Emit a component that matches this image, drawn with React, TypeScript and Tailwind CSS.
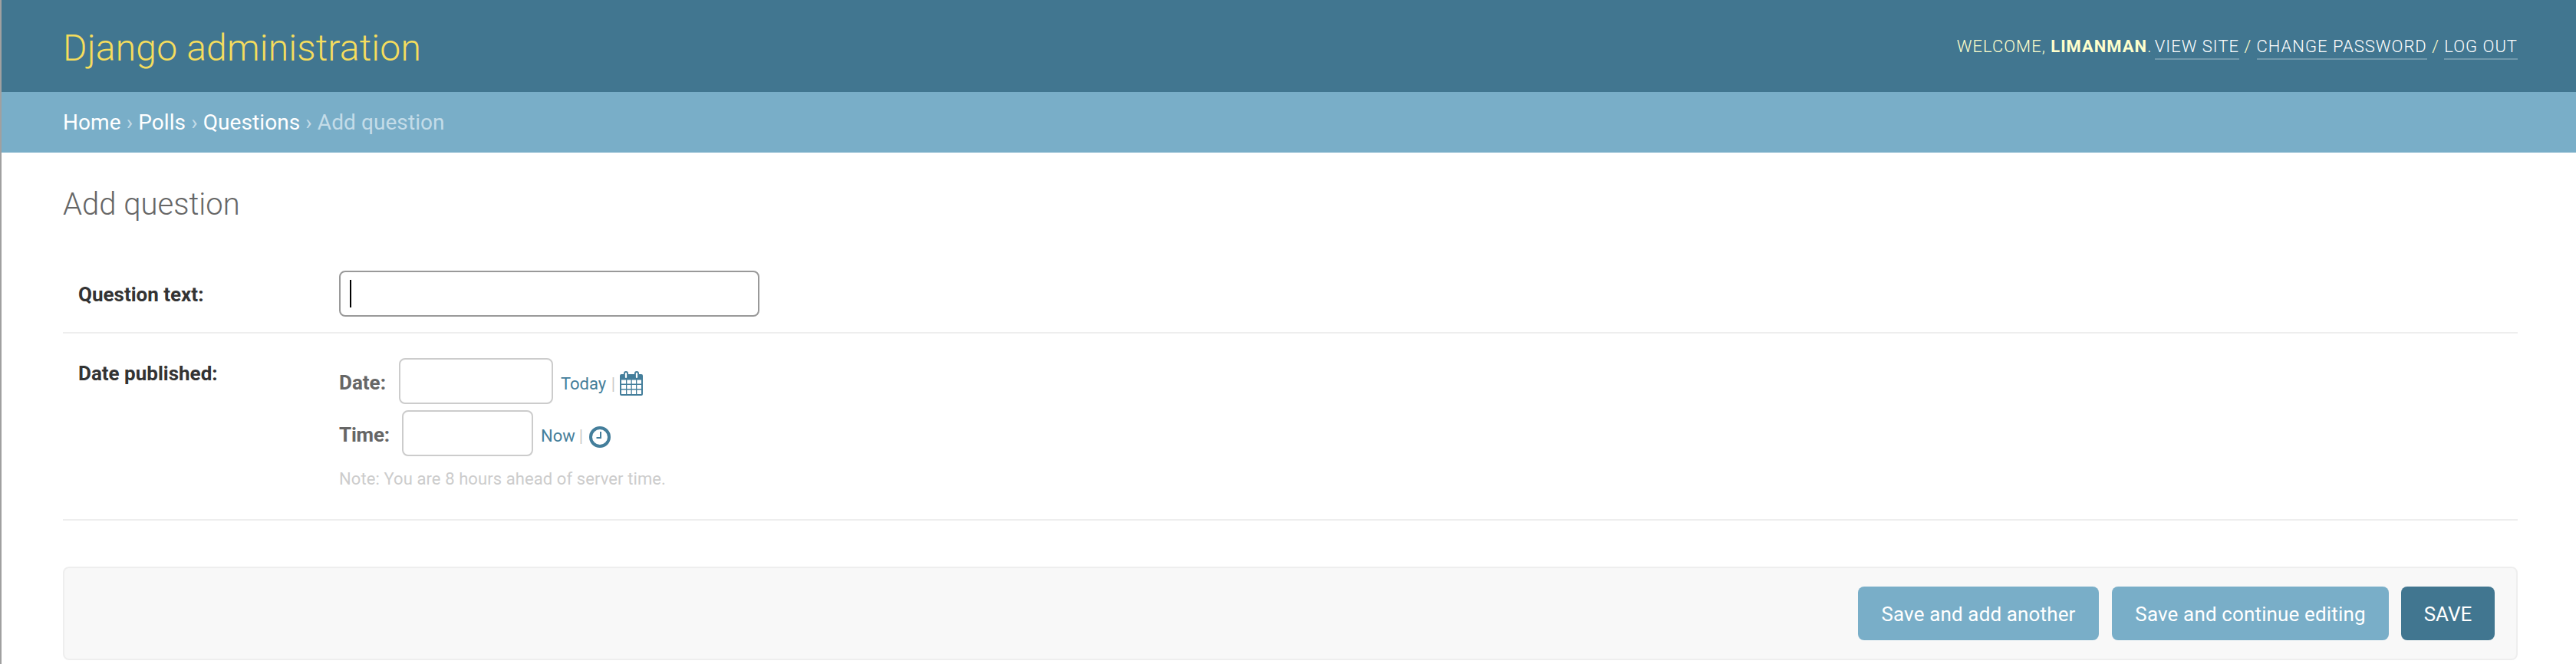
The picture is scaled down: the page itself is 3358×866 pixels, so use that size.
import type { ReactNode } from 'react';

function ToolLink({ children }: { children: ReactNode }) {
  return (
    <a href="#" className="h-[34px] border-b-2 border-white/25 leading-[34px] text-white">
      {children}
    </a>
  );
}

function Header() {
  return (
    <header className="flex h-[120px] items-center justify-between bg-[#417690] pr-[76px] pl-20">
      <h1 className="pt-[5px] text-[48px] leading-[56px] font-light tracking-[0.19px] text-[#f5dd5d]">
        Django administration
      </h1>
      <div className="flex h-[34px] items-start pt-px text-[22px] leading-[34px] font-light tracking-[1px] whitespace-pre text-[#ffc] uppercase">
        <span>Welcome, </span>
        <strong className="font-bold">limanman</strong>
        <span className="tracking-[-0.5px]">. </span>
        <ToolLink>View site</ToolLink>
        <span> / </span>
        <ToolLink>Change password</ToolLink>
        <span> / </span>
        <ToolLink>Log out</ToolLink>
      </div>
    </header>
  );
}

function Breadcrumbs() {
  return (
    <nav className="h-[79px] bg-[#79aec8] pt-5 pl-20 text-[28px] leading-[40px] tracking-[0.08px] text-[#c4dce8]">
      <a href="#" className="text-white">Home</a> › <a href="#" className="text-white">Polls</a> ›{' '}
      <a href="#" className="text-white">Questions</a> › Add question
    </nav>
  );
}

function CalendarIcon() {
  return (
    <svg width="30" height="32" viewBox="0 0 30 32" className="block">
      <path
        fill="#447e9b"
        fillRule="evenodd"
        d="M2 4H5V3a3 3 0 0 1 6 0V4H19V3a3 3 0 0 1 6 0V4H28a2 2 0 0 1 2 2V30a2 2 0 0 1-2 2H2a2 2 0 0 1-2-2V6a2 2 0 0 1 2-2ZM6.900 3V8a1.100 1.100 0 0 0 2.200 0V3a1.100 1.100 0 0 0-2.200 0ZM20.900 3V8a1.100 1.100 0 0 0 2.200 0V3a1.100 1.100 0 0 0-2.200 0ZM2 11.500V16.500H8V11.500ZM9.300 11.500V16.500H14.500V11.500ZM15.800 11.500V16.500H21V11.500ZM22.300 11.500V16.500H28V11.500ZM2 18V23H8V18ZM9.300 18V23H14.500V18ZM15.800 18V23H21V18ZM22.300 18V23H28V18ZM2 24.500V30H8V24.500ZM9.300 24.500V30H14.500V24.500ZM15.800 24.500V30H21V24.500ZM22.300 24.500V30H28V24.500Z"
      />
    </svg>
  );
}

function ClockIcon() {
  return (
    <svg width="28" height="28" viewBox="0 0 28 28" fill="none" stroke="#447e9b" className="block">
      <circle cx="14" cy="14" r="12" strokeWidth="4" />
      <path d="M15 7V15H9.500" strokeWidth="2" />
    </svg>
  );
}

export default function App() {
  return (
    <div className="h-[866px] overflow-hidden border-l-2 border-[#a0a0a0] bg-white font-['Roboto',sans-serif] text-[#333]">
      <Header />
      <Breadcrumbs />
      <main className="pr-[76px] pl-20">
        <h2 className="mt-[43px] h-[50px] text-[40px] leading-[50px] font-light text-[#666]">Add question</h2>

        <div className="mt-[41px] flex h-[102px] items-start border-b-2 border-[#eee] pt-5 pl-5">
          <label className="w-[340px] pt-[11px] text-[26px] leading-[40px] font-bold">Question text:</label>
          <div className="flex h-[60px] w-[548px] items-center rounded-lg border-2 border-[#999] pl-3">
            <span className="h-9 w-0.5 bg-black" />
          </div>
        </div>

        <div className="flex h-[244px] items-start border-b-2 border-[#eee] pt-8 pl-5">
          <span className="w-[340px] text-[26px] leading-[40px] font-bold">Date published:</span>
          <div>
            <div className="flex h-[60px] items-center">
              <label className="w-[78px] pt-1 text-[26px] leading-[40px] font-bold text-[#666]">Date:</label>
              <div className="h-[60px] w-[201px] rounded-lg border-2 border-[#ccc]" />
              <div className="ml-2.5 flex w-[71px] justify-between pt-[7px] text-[22px] text-[#ccc]">
                <a href="#" className="text-[#447e9b]">Today</a>
                <span>|</span>
              </div>
              <div className="pt-1.5 pl-1.5"><CalendarIcon /></div>
            </div>
            <div className="mt-2 flex h-[60px] items-center">
              <label className="w-[82px] pt-1 text-[26px] leading-[40px] font-bold tracking-[-0.2px] text-[#666]">Time:</label>
              <div className="h-[60px] w-[171px] rounded-lg border-2 border-[#ccc]" />
              <div className="ml-2.5 flex w-[55px] justify-between pt-[7px] text-[22px] text-[#ccc]">
                <a href="#" className="text-[#447e9b]">Now</a>
                <span>|</span>
              </div>
              <div className="pt-2.5 pl-2"><ClockIcon /></div>
            </div>
            <p className="mt-[15px] text-[22px] leading-[30px] tracking-[0.09px] text-[#ccc]">
              Note: You are 8 hours ahead of server time.
            </p>
          </div>
        </div>

        <div className="mt-[60px] flex h-[122px] items-start justify-end rounded-lg border-2 border-[#eee] bg-[#f8f8f8] pt-6 pr-7 text-[26px] leading-[72px] text-white">
          <button className="mr-[17px] h-[70px] w-[314px] rounded-lg bg-[#79aec8] tracking-[0.14px]">Save and add another</button>
          <button className="mr-4 h-[70px] w-[361px] rounded-lg bg-[#79aec8] tracking-[0.14px]">Save and continue editing</button>
          <button className="h-[70px] w-[122px] rounded-lg bg-[#417690] uppercase">Save</button>
        </div>
      </main>
    </div>
  );
}
